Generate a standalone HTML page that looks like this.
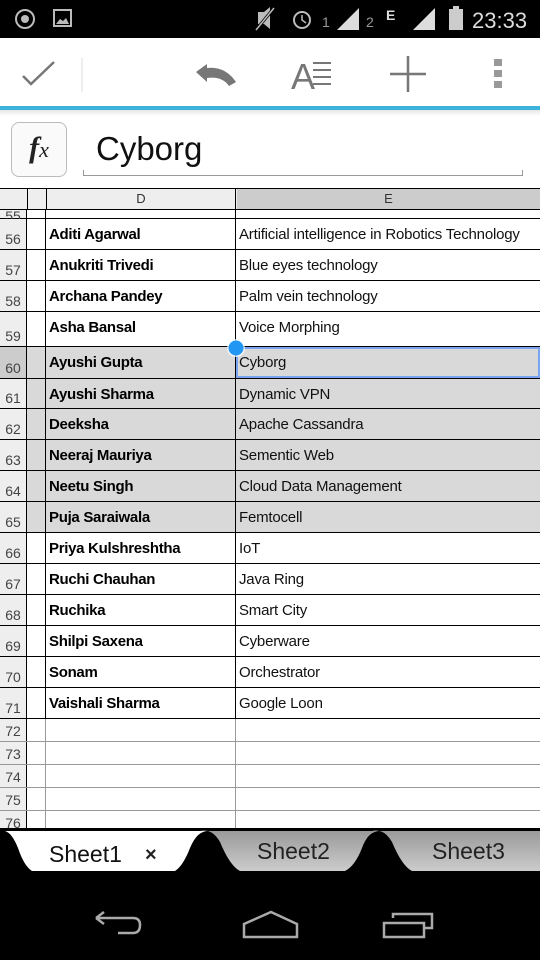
<!DOCTYPE html>
<html><head><meta charset="utf-8"><style>
*{margin:0;padding:0;box-sizing:border-box}
body{width:540px;height:960px;overflow:hidden;background:#fff;font-family:"Liberation Sans",sans-serif;position:relative}
.a{position:absolute}
#sb{left:0;top:0;width:540px;height:38px;background:#000}
#tb{left:0;top:38px;width:540px;height:68px;background:#fff}
#bl{left:0;top:106px;width:540px;height:4px;background:#3bb3dc}
#grid{left:0;top:188px;width:540px;height:640px;overflow:hidden;background:#fff}
.r{position:absolute;left:0;width:540px}
.rn{position:absolute;left:0;top:0;bottom:0;width:27px;background:#eee;border-right:1px solid #000;font-size:14px;color:#444;text-align:center}
.rn span{position:absolute;bottom:2px;left:0;width:26px}
.c{position:absolute;left:27px;top:0;bottom:0;width:19px;border-right:1px solid #000}
.d{position:absolute;left:46px;top:0;bottom:0;width:190px;border-right:1px solid #000;font-size:15px;font-weight:bold;color:#000;padding:7px 0 0 3px;letter-spacing:-0.3px}
.e{position:absolute;left:236px;top:0;bottom:0;right:0;font-size:15px;color:#111;padding:7px 0 0 3px;letter-spacing:-0.2px}
.bk{border-bottom:1px solid #000}
.gy{border-bottom:1px solid #999}
.sh{background:#d9d9d9}
#tabs{left:0;top:828px;width:540px;height:132px;background:#000}
</style></head><body>
<div id="sb" class="a">
<svg class="a" style="left:0;top:0" width="540" height="38">
<circle cx="25" cy="19" r="9" fill="none" stroke="#bbb" stroke-width="2"/><circle cx="25" cy="19" r="4" fill="#bbb"/>
<rect x="54" y="10" width="17" height="16" fill="none" stroke="#bbb" stroke-width="2"/><path d="M56 24 L60 19 L63 21 L66 18 L69 24Z" fill="#bbb"/>
<path d="M258 12 L264 12 L270 7 L270 29 L264 24 L258 24Z" fill="#bbb"/><path d="M256 30 L274 8" stroke="#000" stroke-width="3"/><path d="M256 30 L274 8" stroke="#bbb" stroke-width="1.5"/>
<circle cx="302" cy="20" r="8" fill="none" stroke="#bbb" stroke-width="2"/><path d="M302 15 V20 L306 23" stroke="#bbb" stroke-width="1.5" fill="none"/>
<text x="322" y="27" font-size="14" fill="#999" font-family="Liberation Sans">1</text>
<path d="M337 30 L359 8 L359 30Z" fill="#ddd"/>
<text x="366" y="27" font-size="14" fill="#999" font-family="Liberation Sans">2</text>
<text x="386" y="20" font-size="14" font-weight="bold" fill="#ddd" font-family="Liberation Sans">E</text>
<path d="M413 30 L435 8 L435 30Z" fill="#ddd"/>
<rect x="449" y="9" width="14" height="21" fill="#ccc"/><rect x="453" y="6" width="6" height="3" fill="#ccc"/>
<text x="472" y="28" font-size="22" fill="#ddd" font-family="Liberation Sans">23:33</text>
</svg></div>
<div id="tb" class="a">
<svg class="a" style="left:0;top:0" width="540" height="68">
<path d="M23 38 L31 46 L54 24" stroke="#777" stroke-width="2.5" fill="none"/>
<line x1="82" y1="20" x2="82" y2="54" stroke="#ddd" stroke-width="1"/>
<path d="M196 34 L207 26 L207 30 Q225 28 236 44 L229 48 Q222 38 207 40 L207 44Z" fill="#777"/>
<text x="291" y="51" font-size="36" fill="#777" font-family="Liberation Sans">A</text>
<path d="M313 25 H331 M313 32 H331 M313 39 H331 M313 46 H331" stroke="#777" stroke-width="2"/>
<path d="M408 18 V54 M390 36 H426" stroke="#777" stroke-width="2.5"/>
<rect x="494" y="21" width="8" height="7" fill="#999"/><rect x="494" y="32" width="8" height="7" fill="#999"/><rect x="494" y="43" width="8" height="7" fill="#999"/>
</svg></div>
<div id="bl" class="a"></div>
<div class="a" style="left:0;top:110px;width:540px;height:6px;background:linear-gradient(#e6e6e6,#fff)"></div>
<div class="a" style="left:11px;top:122px;width:56px;height:55px;border:1.5px solid #bbb;border-radius:8px;background:#fafafa;font-family:'Liberation Serif',serif;font-style:italic;font-size:30px;text-align:center;line-height:50px;color:#222"><b>f</b><span style="font-size:22px">x</span></div>
<div class="a" style="left:96px;top:130px;font-size:33px;color:#111">Cyborg</div>
<div class="a" style="left:83px;top:170px;width:440px;height:6px;border:1px solid #999;border-top:none"></div>
<div id="grid" class="a">
<div class="r" style="top:0;height:22px;background:#eee;border-bottom:1px solid #000;border-top:1px solid #000">
<div class="a" style="left:27px;top:0;bottom:0;border-left:1px solid #000"></div>
<div class="a" style="left:46px;top:0;bottom:0;width:190px;border-left:1px solid #000;border-right:1px solid #000;text-align:center;font-size:13px;color:#333;line-height:20px">D</div>
<div class="a" style="left:237px;top:0;bottom:0;right:0;background:#ccc;text-align:center;font-size:13px;color:#333;line-height:20px">E</div>
</div>
<div class="r bk" style="top:22px;height:9px"><div class="rn"><span style="bottom:-6px">55</span></div><div class="c"></div><div class="d"></div><div class="e"></div></div>
<div class="r bk" style="top:31px;height:31px"><div class="rn"><span>56</span></div><div class="c"></div><div class="d">Aditi Agarwal</div><div class="e">Artificial intelligence in Robotics Technology</div></div>
<div class="r bk" style="top:62px;height:31px"><div class="rn"><span>57</span></div><div class="c"></div><div class="d">Anukriti Trivedi</div><div class="e">Blue eyes technology</div></div>
<div class="r bk" style="top:93px;height:31px"><div class="rn"><span>58</span></div><div class="c"></div><div class="d">Archana Pandey</div><div class="e">Palm vein technology</div></div>
<div class="r bk" style="top:124px;height:35px"><div class="rn"><span>59</span></div><div class="c"></div><div class="d">Asha Bansal</div><div class="e">Voice Morphing</div></div>
<div class="r bk sh" style="top:159px;height:32px"><div class="rn" style="background:#ccc"><span>60</span></div><div class="c"></div><div class="d">Ayushi Gupta</div><div class="e" style="border:2px solid #7aa4ef;padding:5px 0 0 1px">Cyborg</div></div>
<div class="r bk sh" style="top:191px;height:30px"><div class="rn"><span>61</span></div><div class="c"></div><div class="d">Ayushi Sharma</div><div class="e">Dynamic VPN</div></div>
<div class="r bk sh" style="top:221px;height:31px"><div class="rn"><span>62</span></div><div class="c"></div><div class="d">Deeksha</div><div class="e">Apache Cassandra</div></div>
<div class="r bk sh" style="top:252px;height:31px"><div class="rn"><span>63</span></div><div class="c"></div><div class="d">Neeraj Mauriya</div><div class="e">Sementic Web</div></div>
<div class="r bk sh" style="top:283px;height:31px"><div class="rn"><span>64</span></div><div class="c"></div><div class="d">Neetu Singh</div><div class="e">Cloud Data Management</div></div>
<div class="r bk sh" style="top:314px;height:31px"><div class="rn"><span>65</span></div><div class="c"></div><div class="d">Puja Saraiwala</div><div class="e">Femtocell</div></div>
<div class="r bk" style="top:345px;height:31px"><div class="rn"><span>66</span></div><div class="c"></div><div class="d">Priya Kulshreshtha</div><div class="e">IoT</div></div>
<div class="r bk" style="top:376px;height:31px"><div class="rn"><span>67</span></div><div class="c"></div><div class="d">Ruchi Chauhan</div><div class="e">Java Ring</div></div>
<div class="r bk" style="top:407px;height:31px"><div class="rn"><span>68</span></div><div class="c"></div><div class="d">Ruchika</div><div class="e">Smart City</div></div>
<div class="r bk" style="top:438px;height:31px"><div class="rn"><span>69</span></div><div class="c"></div><div class="d">Shilpi Saxena</div><div class="e">Cyberware</div></div>
<div class="r bk" style="top:469px;height:31px"><div class="rn"><span>70</span></div><div class="c"></div><div class="d">Sonam</div><div class="e">Orchestrator</div></div>
<div class="r bk" style="top:500px;height:31px"><div class="rn"><span>71</span></div><div class="c"></div><div class="d">Vaishali Sharma</div><div class="e">Google Loon</div></div>
<div class="r gy" style="top:531px;height:23px"><div class="rn"><span>72</span></div><div class="c" style="border-color:#999"></div><div class="d" style="border-color:#999"></div></div>
<div class="r gy" style="top:554px;height:23px"><div class="rn"><span>73</span></div><div class="c" style="border-color:#999"></div><div class="d" style="border-color:#999"></div></div>
<div class="r gy" style="top:577px;height:23px"><div class="rn"><span>74</span></div><div class="c" style="border-color:#999"></div><div class="d" style="border-color:#999"></div></div>
<div class="r gy" style="top:600px;height:23px"><div class="rn"><span>75</span></div><div class="c" style="border-color:#999"></div><div class="d" style="border-color:#999"></div></div>
<div class="r gy" style="top:623px;height:23px"><div class="rn"><span>76</span></div><div class="c" style="border-color:#999"></div><div class="d" style="border-color:#999"></div></div>
<svg class="a" style="left:226px;top:150px" width="20" height="20"><circle cx="10" cy="10" r="9" fill="#fff" opacity=".7"/><circle cx="10" cy="10" r="7.5" fill="#2196f3"/></svg>
</div>
<div id="tabs" class="a">
<svg class="a" style="left:0;top:0" width="540" height="50">
<defs><linearGradient id="g" x1="0" y1="0" x2="0" y2="1"><stop offset="0" stop-color="#999"/><stop offset="1" stop-color="#ccc"/></linearGradient></defs>
<path d="M372 3 Q384 0 392 14 Q402 38 412 43 L540 43 L540 3Z" fill="url(#g)"/>
<path d="M200 3 Q212 0 220 14 Q230 38 240 43 L345 43 Q355 38 362 20 Q368 3 380 3Z" fill="url(#g)"/>
<path d="M0 3 L5 3 Q12 5 18 20 Q24 38 32 43 L175 43 Q183 38 190 20 Q197 3 208 3Z" fill="#fff"/>
<text x="49" y="34" font-size="23" fill="#111" font-family="Liberation Sans">Sheet1</text>
<text x="145" y="33" font-size="20" font-weight="bold" fill="#222" font-family="Liberation Sans">×</text>
<text x="257" y="31" font-size="23" fill="#222" font-family="Liberation Sans">Sheet2</text>
<text x="432" y="31" font-size="23" fill="#222" font-family="Liberation Sans">Sheet3</text>
</svg>
<svg class="a" style="left:0;top:80px" width="540" height="40">
<path d="M96 10 L104 4 M96 10 L104 16 M96 10 H133 Q140 10 140 17 Q140 25 133 25 H118" stroke="#aaa" stroke-width="2.5" fill="none"/>
<path d="M244 16 L271 4 L297 16 V29 H244Z" stroke="#aaa" stroke-width="2.5" fill="none"/>
<rect x="384" y="15" width="40" height="14" stroke="#aaa" stroke-width="2.5" fill="none"/>
<path d="M393 10 V6 H432 V20 H424" stroke="#aaa" stroke-width="2.5" fill="none"/>
</svg>
</div>
</body></html>
